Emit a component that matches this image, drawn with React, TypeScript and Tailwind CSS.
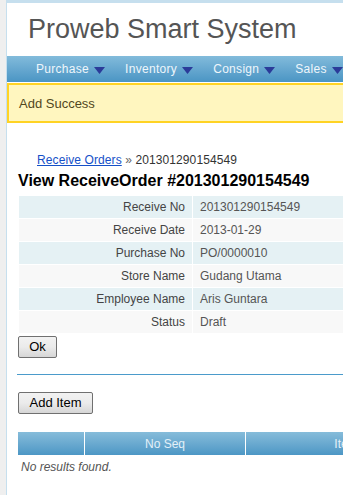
const menu = ["Purchase", "Inventory", "Consign", "Sales", "Report"];

const details: [string, string][] = [
  ["Receive No", "201301290154549"],
  ["Receive Date", "2013-01-29"],
  ["Purchase No", "PO/0000010"],
  ["Store Name", "Gudang Utama"],
  ["Employee Name", "Aris Guntara"],
  ["Status", "Draft"],
];

function Caret() {
  return (
    <svg width="11" height="7" viewBox="0 0 11 7" className="ml-[5px] mt-[2px]">
      <path d="M0 0H11L5.5 7Z" fill="#2b3b99" />
    </svg>
  );
}

function Button({ label, width }: { label: string; width: string }) {
  return (
    <button
      type="button"
      className={`${width} h-[22px] rounded-[2px] border border-[#707070] bg-gradient-to-b from-[#f2f2f2] via-[#ebebeb] to-[#d6d6d6] text-[13px] leading-none text-black`}
    >
      {label}
    </button>
  );
}

export default function App() {
  return (
    <div className="h-[495px] w-[343px] overflow-hidden bg-[#efefef] font-['Liberation_Sans',Arial,sans-serif]">
      <div className="ml-[6px] flex h-full w-[960px] flex-col border-l border-t-[3px] border-[#c6dfee] bg-white">
        <header className="flex h-[53px] items-center pl-[21px]">
          <h1 className="text-[27px] leading-none text-[#555]">Proweb Smart System</h1>
        </header>

        <nav className="flex h-[26px] items-center bg-gradient-to-b from-[#82bbdb] to-[#4a95c4] pl-[29px] text-[12px] text-[#eef6fb]">
          {menu.map((m) => (
            <div key={m} className="mr-[20px] flex items-center">
              <span className="tracking-[0.3px]">{m}</span>
              <Caret />
            </div>
          ))}
        </nav>

        <div className="mt-px flex h-[40px] items-center border-y-2 border-l-2 border-[#ffd324] bg-[#fff6bf] pl-[10px] pt-[2px] text-[13px] text-[#514721]">
          Add Success
        </div>

        <div className="pl-[11px]">
          <div className="mt-[28px] pl-[19px] text-[12px] tracking-[0.1px] text-[#333]">
            <a href="#" className="text-[#1550c8] underline">Receive Orders</a>
            <span className="text-[#666]"> » </span>
            <span>201301290154549</span>
          </div>
          <h2 className="mt-[2px] text-[16px] font-bold leading-[20px] text-black">
            View ReceiveOrder #201301290154549
          </h2>

          <table className="mt-[4px] w-[700px] border-collapse text-[12px] text-[#444]">
            <tbody>
              {details.map(([k, v], i) => (
                <tr key={k} className={i % 2 === 0 ? "bg-[#e5f1f4]" : "bg-[#f8f8f8]"}>
                  <th className="h-[23px] w-[174px] border border-white pr-[7px] text-right font-normal">{k}</th>
                  <td className="h-[23px] border border-white pl-[7px] text-[#555]">{v}</td>
                </tr>
              ))}
            </tbody>
          </table>

          <div>
            <Button label="Ok" width="w-[39px]" />
          </div>

          <hr className="mt-[16px] -ml-px border-t border-[#4b9bcb]" />

          <div className="mt-[15px]">
            <Button label="Add Item" width="w-[75px]" />
          </div>

          <div className="mt-[18px] flex h-[23px] bg-gradient-to-b from-[#86bcda] to-[#4c97c5] text-[12px] text-[#e3f0f8]">
            <div className="w-[67px] border-r border-white" />
            <div className="flex w-[161px] items-center justify-center border-r border-white">No Seq</div>
            <div className="flex w-[200px] items-center justify-center">Item</div>
          </div>
          <p className="mt-[3px] pl-[3px] text-[12px] italic text-[#555]">No results found.</p>
        </div>
      </div>
    </div>
  );
}
